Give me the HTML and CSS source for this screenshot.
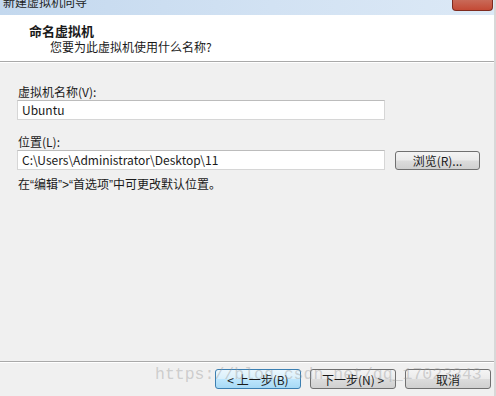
FILE: index.html
```html
<!DOCTYPE html>
<html lang="zh-CN">
<head>
    <meta charset="UTF-8">
    <title>新建虚拟机向导</title>
    <link rel="stylesheet" href="styles.css">
</head>
<body>
    <div class="window">
        <div class="titlebar">
            <span class="title-text">新建虚拟机向导</span>
            <span class="close-btn"></span>
        </div>

        <div class="header">
            <div class="header-title">命名虚拟机</div>
            <div class="header-sub">您要为此虚拟机使用什么名称?</div>
        </div>

        <div class="content">
            <label class="field-label">虚拟机名称(V):</label>
            <div class="text-box wide">Ubuntu</div>

            <label class="field-label second">位置(L):</label>
            <div class="path-row">
                <div class="text-box">C:\Users\Administrator\Desktop\11</div>
                <button class="btn browse">浏览(R)...</button>
            </div>

            <p class="hint">在<span class="q">“</span>编辑<span class="q">”&gt;“</span>首选项<span class="q">”</span>中可更改默认位置。</p>
        </div>

        <div class="footer">
            <button class="btn active">&lt; 上一步(B)</button>
            <button class="btn">下一步(N) &gt;</button>
            <button class="btn">取消</button>
        </div>

        <div class="watermark">https://blog.csdn.net/qq_17023343</div>
    </div>
</body>
</html>
```

FILE: styles.css
```css
* {
    box-sizing: border-box;
}

body {
    margin: 0;
    background: #f0f0f0;
    font-family: "Noto Sans CJK SC", "Liberation Sans", sans-serif;
    font-size: 12px;
    color: #1a1a1a;
}

.window {
    width: 496px;
    height: 396px;
    display: flex;
    flex-direction: column;
    position: relative;
    overflow: hidden;
    border-right: 2px solid #d8d8d8;
}

/* title bar */
.titlebar {
    height: 15px;
    background: linear-gradient(90deg, #c3d8ee 0%, #d2e2f3 55%, #dce9f6 100%);
    display: flex;
    justify-content: space-between;
    overflow: hidden;
}

.title-text {
    margin: -6px 0 0 3px;
    line-height: 16px;
    color: #222;
}

.close-btn {
    width: 41px;
    height: 11px;
    margin-right: 1px;
    background: linear-gradient(180deg, #c96a58 0%, #c44a35 100%);
    border: 1px solid #7e2a1e;
    border-top: none;
    border-radius: 0 0 4px 4px;
}

/* header */
.header {
    height: 47px;
    background: #fff;
    border-bottom: 1px solid #a9a9a9;
    padding: 8px 0 0 29px;
}

.header-title {
    font-weight: bold;
    font-size: 13px;
    line-height: 16px;
}

.header-sub {
    margin-left: 21px;
    line-height: 16px;
}

/* main form */
.content {
    flex: 1;
    padding: 21px 0 0 17px;
    border-top: 1px solid #fff;
}

.field-label {
    display: block;
    line-height: 15px;
    margin: 0 0 1px 1px;
}

.field-label.second {
    margin-top: 14px;
}

.text-box {
    width: 368px;
    height: 20px;
    background: #fff;
    border: 1px solid #d6d6d6;
    border-top-color: #bcbcbc;
    padding: 0 4px;
    line-height: 18px;
    white-space: nowrap;
}

.path-row {
    display: flex;
    align-items: center;
    gap: 10px;
}

.hint {
    margin: 6px 0 0 1px;
    line-height: 15px;
}

.hint .q {
    font-family: "Liberation Sans", sans-serif;
}

/* buttons */
.btn {
    font-family: inherit;
    font-size: 12px;
    color: #1a1a1a;
    width: 86px;
    height: 19px;
    padding: 0;
    line-height: 17px;
    border: 1px solid #707070;
    border-radius: 3px;
    background: linear-gradient(180deg, #f4f4f4 0%, #ebebeb 48%, #dcdcdc 52%, #d0d0d0 100%);
}

.btn.browse {
    width: 85px;
}

.btn.active {
    border-color: #3c7fb1;
    background: linear-gradient(180deg, #eaf6fd 0%, #d9f0fc 48%, #bee6fd 52%, #a7d9f5 100%);
}

.footer {
    height: 35px;
    border-top: 1px solid #a9a9a9;
    box-shadow: inset 0 1px 0 #fff;
    display: flex;
    justify-content: flex-end;
    gap: 9px;
    padding: 7px 3px 0 0;
}

.footer .btn {
    height: 20px;
}

.watermark {
    position: absolute;
    left: 155px;
    top: 366px;
    font-family: "Liberation Mono", monospace;
    font-size: 16.5px;
    line-height: 18px;
    color: rgba(150, 150, 150, 0.4);
    pointer-events: none;
    white-space: nowrap;
}
```
